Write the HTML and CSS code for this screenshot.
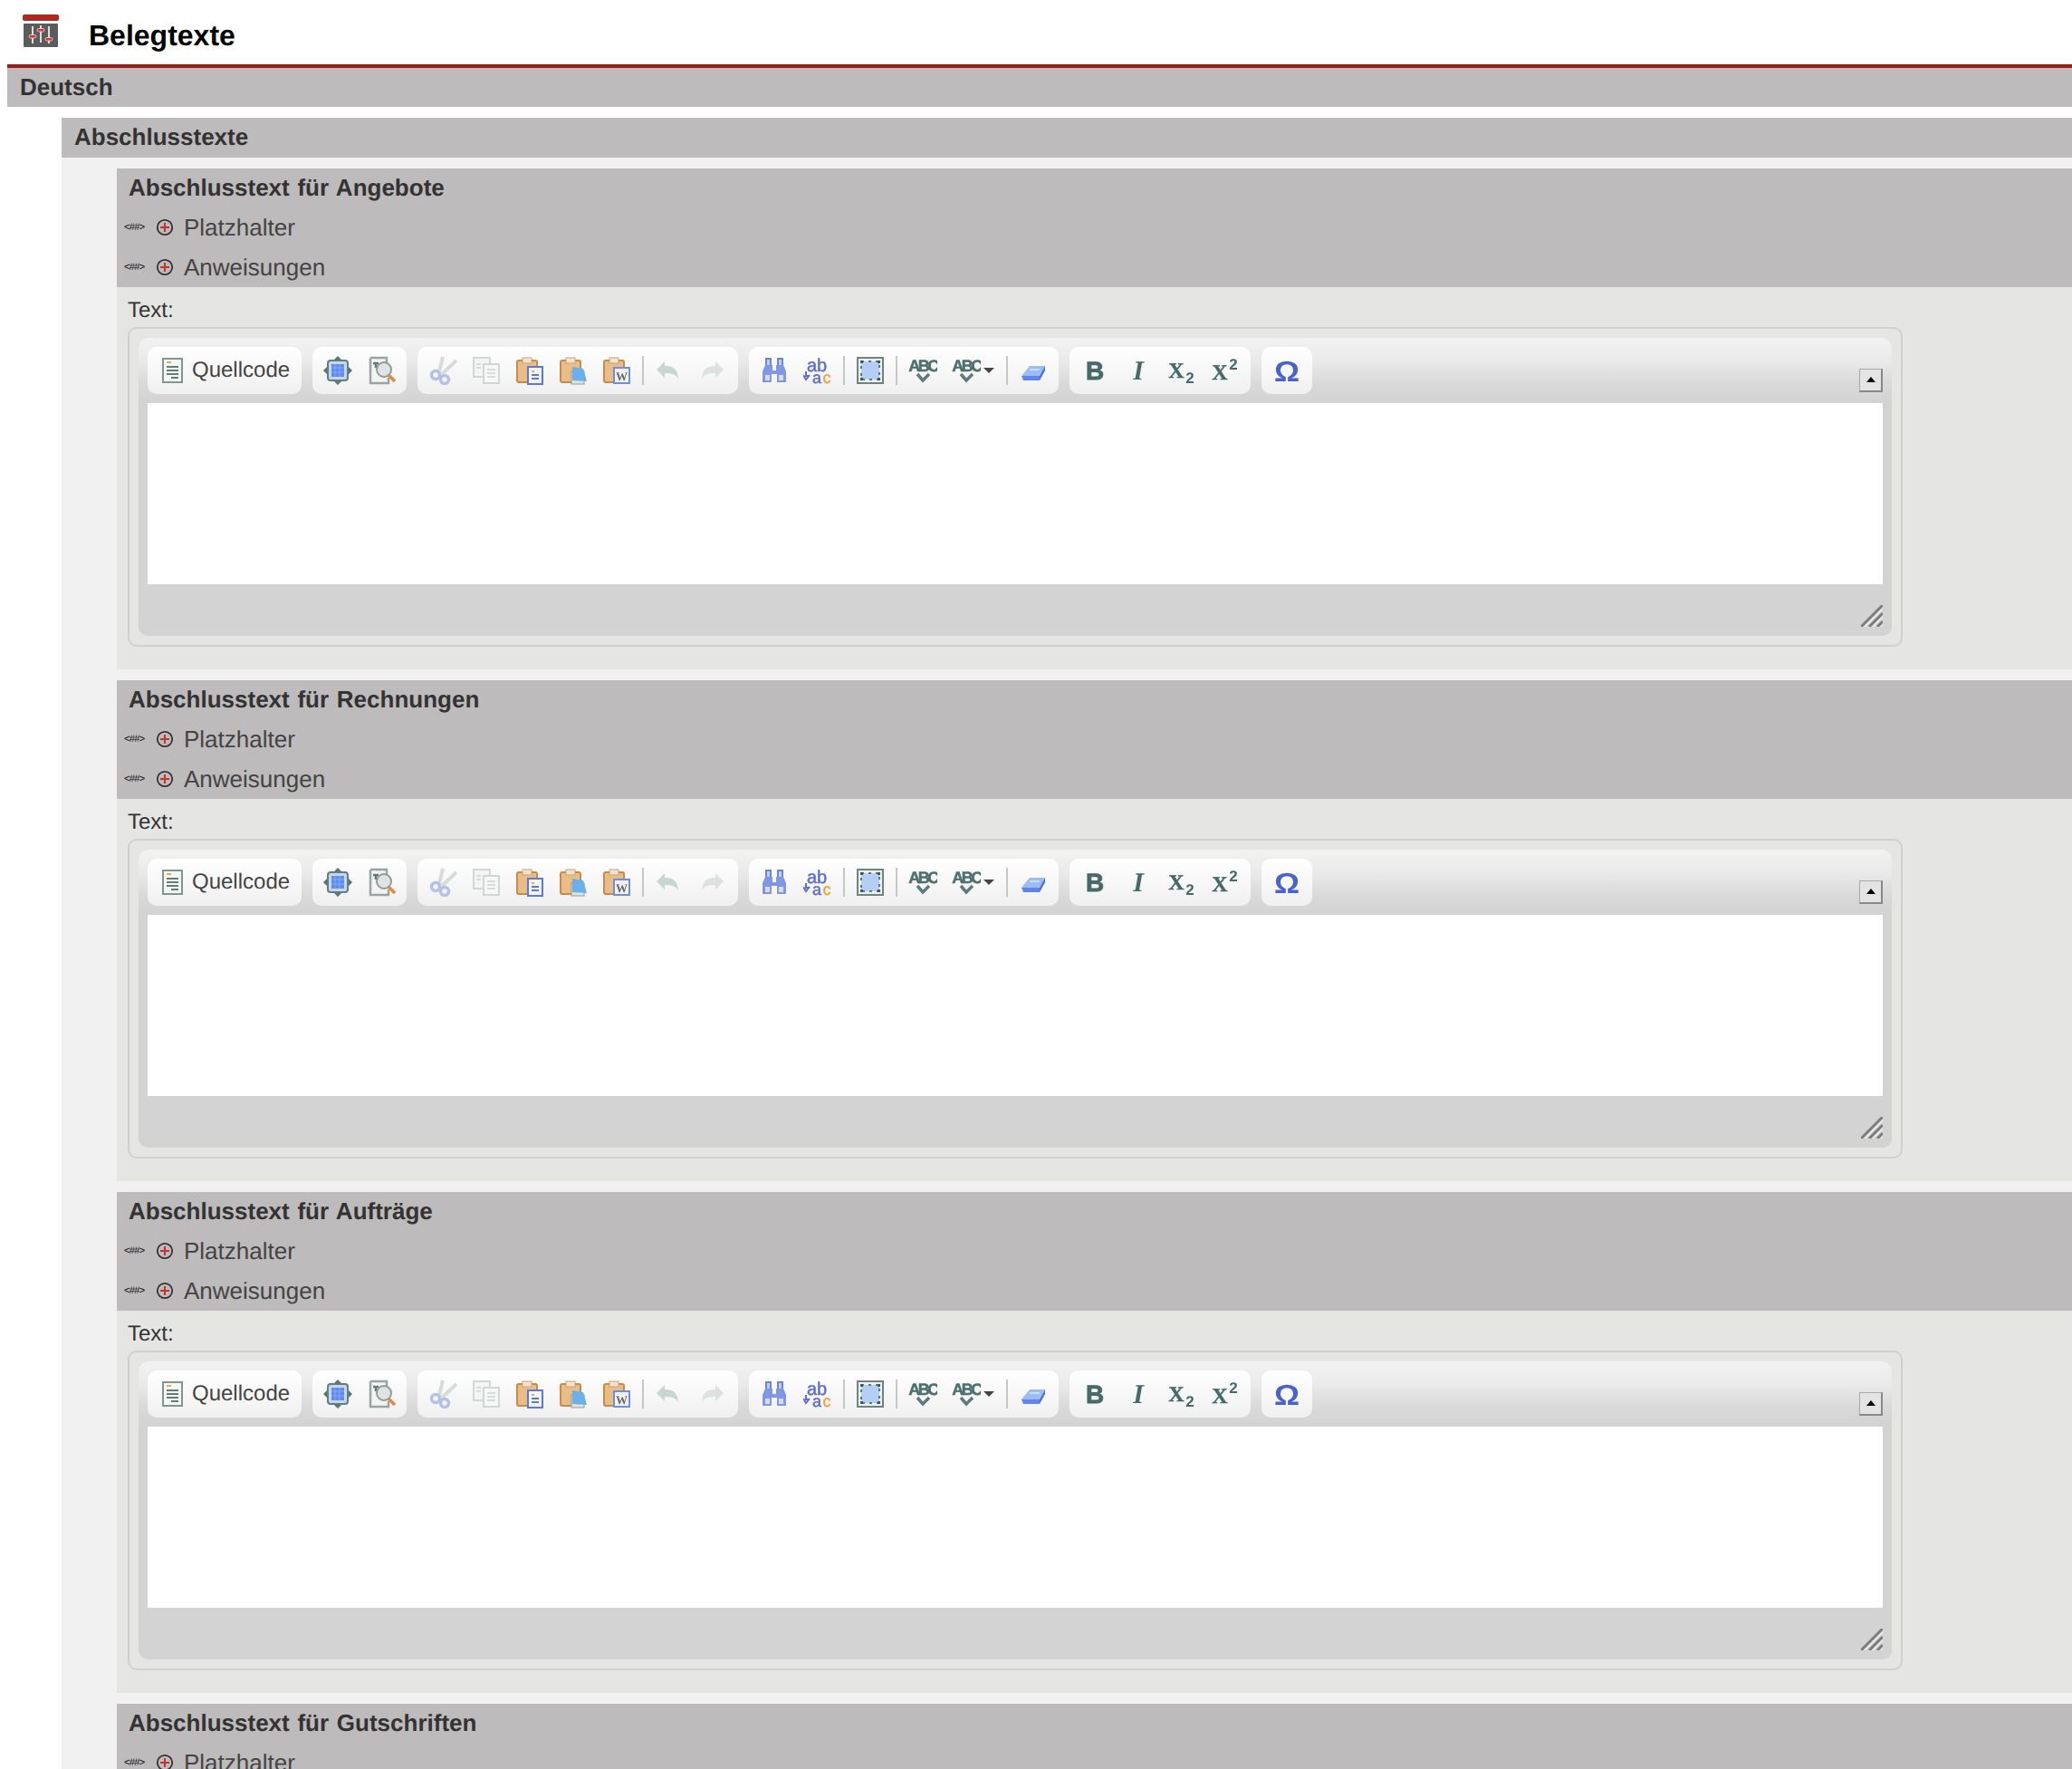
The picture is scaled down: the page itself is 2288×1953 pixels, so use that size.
FILE: index.html
```html
<!DOCTYPE html>
<html lang="de">
<head>
    <meta charset="UTF-8">
    <meta name="viewport" content="width=device-width, initial-scale=1.0">
    <title>Belegtexte</title>
    <link rel="stylesheet" href="styles.css">
</head>
<body>
    <!-- editor icons, reused by every toolbar -->
    <svg class="sprite" xmlns="http://www.w3.org/2000/svg">
        <symbol id="i-source" viewBox="0 0 32 32">
            <rect x="5" y="3" width="21" height="26" fill="#f5f7f3" stroke="#7f9692" stroke-width="2"/>
            <path d="M9 7h5" stroke="#eda94f" stroke-width="2"/>
            <path d="M9 12h13M9 16h13M9 20h13M14 24h8" stroke="#5f7d79" stroke-width="2"/>
        </symbol>
        <symbol id="i-maximize" viewBox="0 0 32 32">
            <path d="M16 0l5 5H11zM16 32l-5-5h10zM0 16l5-5v10zM32 16l-5 5V11z" fill="#55757a"/>
            <rect x="5" y="5" width="22" height="22" rx="3" fill="#c9d6e6" stroke="#5f7f80" stroke-width="2"/>
            <rect x="9" y="9" width="14" height="14" fill="#5f8cf0"/>
            <path d="M13 9v14M18 9v14M9 13h14M9 18h14" stroke="#84a8f6"/>
        </symbol>
        <symbol id="i-preview" viewBox="0 0 32 32">
            <path d="M4 2h18v8M4 2v28h20v-6" fill="#f3f3f1" stroke="#98a5a2" stroke-width="2.5"/>
            <path d="M7 8h6M10 8v5" stroke="#60787a" stroke-width="2.5"/>
            <circle cx="19" cy="15" r="8" fill="#dfe3e3" stroke="#8f9b99" stroke-width="2"/>
            <path d="M24 21l7 7" stroke="#e8893a" stroke-width="3.5"/>
        </symbol>
        <symbol id="i-cut" viewBox="0 0 32 32">
            <path d="M16 1l-4 16M31 5L15 20" stroke="#d6dbdb" stroke-width="4" fill="none"/>
            <circle cx="8" cy="21" r="4.5" fill="none" stroke="#b3c2e6" stroke-width="3.5"/>
            <circle cx="18" cy="26" r="4.5" fill="none" stroke="#b3c2e6" stroke-width="3.5"/>
        </symbol>
        <symbol id="i-copy" viewBox="0 0 32 32">
            <rect x="2" y="2" width="18" height="21" fill="#f4f5f3" stroke="#ced8d6" stroke-width="2"/>
            <rect x="13" y="9" width="17" height="21" fill="#f7f8f6" stroke="#ced8d6" stroke-width="2"/>
            <path d="M17 15h9M17 19h9M17 23h9M5 9h5M5 13h5" stroke="#d6dddc" stroke-width="2"/>
        </symbol>
        <symbol id="i-paste" viewBox="0 0 32 32">
            <rect x="2" y="5" width="22" height="24" rx="2" fill="#e9bd87" stroke="#c98a4a" stroke-width="2"/>
            <rect x="8" y="2" width="10" height="6" fill="#f4e3cb" stroke="#c9a27a"/>
            <rect x="14" y="12" width="16" height="19" fill="#f1f4fc" stroke="#5d78d8" stroke-width="2"/>
            <path d="M18 17h3" stroke="#eda94f" stroke-width="2"/>
            <path d="M18 21h8M18 25h8" stroke="#5d78d8" stroke-width="2"/>
        </symbol>
        <symbol id="i-paste-text" viewBox="0 0 32 32">
            <rect x="2" y="5" width="22" height="24" rx="2" fill="#e9bd87" stroke="#c98a4a" stroke-width="2"/>
            <rect x="8" y="2" width="10" height="6" fill="#f4e3cb" stroke="#c9a27a"/>
            <rect x="14" y="17" width="14" height="14" fill="#dfe3e3" stroke="#8f9c99"/>
            <path d="M15 12l12 2 4 14-16-1z" fill="#6cb0ea"/>
        </symbol>
        <symbol id="i-paste-word" viewBox="0 0 32 32">
            <rect x="2" y="5" width="22" height="24" rx="2" fill="#e9bd87" stroke="#c98a4a" stroke-width="2"/>
            <rect x="8" y="2" width="10" height="6" fill="#f4e3cb" stroke="#c9a27a"/>
            <rect x="13" y="13" width="17" height="17" fill="#f1f1ef" stroke="#6f8fe6" stroke-width="2"/>
            <text x="21.5" y="27" class="ico-text word">W</text>
        </symbol>
        <symbol id="i-undo" viewBox="0 0 32 32">
            <path d="M11 6v5c10 0 14 4 15 14-3-5-7-6-15-6v5l-9-9z" fill="#c9d5d3"/>
        </symbol>
        <symbol id="i-redo" viewBox="0 0 32 32">
            <path d="M19 6v5C9 11 5 15 4 25c3-5 7-6 15-6v5l9-9z" fill="#dbe2e1"/>
        </symbol>
        <symbol id="i-find" viewBox="0 0 32 32">
            <path d="M7 3h5v8H7zM20 3h5v8h-5z" fill="#bcd0f2" stroke="#6b86dc" stroke-width="2"/>
            <path d="M3 17l3-7h8v6h4v-6h8l3 7v12H19v-9h-6v9H3z" fill="#7f97e4"/>
            <path d="M6 21h5v6H6zM21 21h5v6h-5z" fill="#d9dbdd"/>
        </symbol>
        <symbol id="i-replace" viewBox="0 0 32 32">
            <text x="15" y="17" class="ico-text ab">ab</text>
            <text x="15" y="30" class="ico-text ab lower">a</text>
            <text x="26" y="30" class="ico-text ab lower c">c</text>
            <path d="M3 17v5h4M0 21l3 5 4-5" fill="none" stroke="#5f6fd0" stroke-width="2"/>
        </symbol>
        <symbol id="i-select" viewBox="0 0 32 32">
            <rect x="2" y="2" width="28" height="28" fill="#eef0ee" stroke="#6c8583" stroke-width="2"/>
            <rect x="6" y="6" width="20" height="20" fill="#b3cff5"/>
            <path d="M6 6h20v20H6z" fill="none" stroke="#5d7b7b" stroke-width="2" stroke-dasharray="3 5"/>
            <path d="M5 5h3v3H5zM24 5h3v3h-3zM5 24h3v3H5zM24 24h3v3h-3z" fill="#3e5c5c"/>
        </symbol>
        <symbol id="i-spell" viewBox="0 0 32 32">
            <text x="16" y="17" class="ico-text abc">ABC</text>
            <path d="M10 20l6 7 7-7" fill="none" stroke="#5d7b7b" stroke-width="3.5"/>
        </symbol>
        <symbol id="i-eraser" viewBox="0 0 32 32">
            <path d="M3 22l9-11h17l-6 11z" fill="#9cbcf6"/>
            <path d="M3 22h20v5H5z" fill="#5f86ec"/>
            <path d="M23 22l6-11v5l-6 11z" fill="#4e70d0"/>
            <path d="M12 15h11" stroke="#c9dbfa" stroke-width="2"/>
        </symbol>
        <symbol id="i-bold" viewBox="0 0 32 32">
            <text x="16" y="26" class="ico-text bold">B</text>
        </symbol>
        <symbol id="i-italic" viewBox="0 0 32 32">
            <text x="16" y="26" class="ico-text italic">I</text>
        </symbol>
        <symbol id="i-sub" viewBox="0 0 32 32">
            <text x="10" y="24" class="ico-text script">X</text>
            <text x="25" y="30" class="ico-text small">2</text>
        </symbol>
        <symbol id="i-sup" viewBox="0 0 32 32">
            <text x="10" y="26" class="ico-text script">X</text>
            <text x="25" y="15" class="ico-text small">2</text>
        </symbol>
        <symbol id="i-omega" viewBox="0 0 32 32">
            <text x="16" y="28" class="ico-text omega" textLength="28" lengthAdjust="spacingAndGlyphs">Ω</text>
        </symbol>
        <symbol id="i-placeholder-plus" viewBox="0 0 20 20">
            <circle cx="10" cy="10" r="8.2" fill="none" stroke="#333" stroke-width="1.8"/>
            <path d="M10 5v10M5 10h10" stroke="#c8322d" stroke-width="2"/>
        </symbol>
        <symbol id="i-grip" viewBox="0 0 24 24">
            <path d="M0 24L24 0M9 24L24 9M18 24l6-6" stroke="#7d7d7d" stroke-width="3"/>
            <path d="M4 24L24 4M13 24L24 13M22 24l2-2" stroke="#eee" stroke-width="1.5"/>
        </symbol>
    </svg>

    <div class="page">
        <header class="page-head">
            <svg class="page-icon" viewBox="0 0 40 36" xmlns="http://www.w3.org/2000/svg">
                <rect x="0" y="0" width="40" height="7" rx="2" fill="#ad2a20"/>
                <rect x="1" y="10" width="38" height="26" rx="1" fill="#5c5c5c"/>
                <path d="M11 13v19M20 12v19M29 13v19" stroke="#dedede" stroke-width="2"/>
                <rect x="7" y="22.5" width="8" height="3.5" rx="1.7" fill="#d8392e" stroke="#eee" stroke-width="0.7"/>
                <rect x="16" y="15.5" width="8" height="3.5" rx="1.7" fill="#d8392e" stroke="#eee" stroke-width="0.7"/>
                <rect x="25" y="25.5" width="8" height="3.5" rx="1.7" fill="#d8392e" stroke="#eee" stroke-width="0.7"/>
            </svg>
            <h1>Belegtexte</h1>
        </header>

        <h2 class="bar bar-lang">Deutsch</h2>

        <div class="group-level">
            <h3 class="bar">Abschlusstexte</h3>
            <div class="text-list">

                <section class="text-block">
                    <div class="block-head">
                        <h4>Abschlusstext für Angebote</h4>
                        <div class="fold-row"><span class="tag">&lt;##&gt;</span><svg class="plus"><use href="#i-placeholder-plus"/></svg>Platzhalter</div>
                        <div class="fold-row"><span class="tag">&lt;##&gt;</span><svg class="plus"><use href="#i-placeholder-plus"/></svg>Anweisungen</div>
                    </div>
                    <div class="block-body">
                        <label class="field-label">Text:</label>
                        <div class="editor">
                            <div class="editor-inner">
                                <div class="toolbar">
                                    <div class="tool-group">
                                        <span class="tool source"><svg class="ico"><use href="#i-source"/></svg></span><span class="tool-label">Quellcode</span>
                                    </div>
                                    <div class="tool-group">
                                        <span class="tool"><svg class="ico"><use href="#i-maximize"/></svg></span>
                                        <span class="tool"><svg class="ico"><use href="#i-preview"/></svg></span>
                                    </div>
                                    <div class="tool-group">
                                        <span class="tool"><svg class="ico"><use href="#i-cut"/></svg></span>
                                        <span class="tool"><svg class="ico"><use href="#i-copy"/></svg></span>
                                        <span class="tool"><svg class="ico"><use href="#i-paste"/></svg></span>
                                        <span class="tool"><svg class="ico"><use href="#i-paste-text"/></svg></span>
                                        <span class="tool"><svg class="ico"><use href="#i-paste-word"/></svg></span>
                                        <span class="sep"></span>
                                        <span class="tool"><svg class="ico"><use href="#i-undo"/></svg></span>
                                        <span class="tool"><svg class="ico"><use href="#i-redo"/></svg></span>
                                    </div>
                                    <div class="tool-group">
                                        <span class="tool"><svg class="ico"><use href="#i-find"/></svg></span>
                                        <span class="tool"><svg class="ico"><use href="#i-replace"/></svg></span>
                                        <span class="sep"></span>
                                        <span class="tool"><svg class="ico"><use href="#i-select"/></svg></span>
                                        <span class="sep"></span>
                                        <span class="tool"><svg class="ico"><use href="#i-spell"/></svg></span>
                                        <span class="tool tool-drop"><svg class="ico"><use href="#i-spell"/></svg><span class="drop-arrow"></span></span>
                                        <span class="sep"></span>
                                        <span class="tool"><svg class="ico"><use href="#i-eraser"/></svg></span>
                                    </div>
                                    <div class="tool-group">
                                        <span class="tool"><svg class="ico"><use href="#i-bold"/></svg></span>
                                        <span class="tool"><svg class="ico"><use href="#i-italic"/></svg></span>
                                        <span class="tool"><svg class="ico"><use href="#i-sub"/></svg></span>
                                        <span class="tool"><svg class="ico"><use href="#i-sup"/></svg></span>
                                    </div>
                                    <div class="tool-group">
                                        <span class="tool"><svg class="ico"><use href="#i-omega"/></svg></span>
                                    </div>
                                    <span class="collapse"></span>
                                </div>
                                <div class="editor-area"></div>
                                <div class="editor-foot"><svg class="grip"><use href="#i-grip"/></svg></div>
                            </div>
                        </div>
                    </div>
                </section>

                <section class="text-block">
                    <div class="block-head">
                        <h4>Abschlusstext für Rechnungen</h4>
                        <div class="fold-row"><span class="tag">&lt;##&gt;</span><svg class="plus"><use href="#i-placeholder-plus"/></svg>Platzhalter</div>
                        <div class="fold-row"><span class="tag">&lt;##&gt;</span><svg class="plus"><use href="#i-placeholder-plus"/></svg>Anweisungen</div>
                    </div>
                    <div class="block-body">
                        <label class="field-label">Text:</label>
                        <div class="editor">
                            <div class="editor-inner">
                                <div class="toolbar">
                                    <div class="tool-group">
                                        <span class="tool source"><svg class="ico"><use href="#i-source"/></svg></span><span class="tool-label">Quellcode</span>
                                    </div>
                                    <div class="tool-group">
                                        <span class="tool"><svg class="ico"><use href="#i-maximize"/></svg></span>
                                        <span class="tool"><svg class="ico"><use href="#i-preview"/></svg></span>
                                    </div>
                                    <div class="tool-group">
                                        <span class="tool"><svg class="ico"><use href="#i-cut"/></svg></span>
                                        <span class="tool"><svg class="ico"><use href="#i-copy"/></svg></span>
                                        <span class="tool"><svg class="ico"><use href="#i-paste"/></svg></span>
                                        <span class="tool"><svg class="ico"><use href="#i-paste-text"/></svg></span>
                                        <span class="tool"><svg class="ico"><use href="#i-paste-word"/></svg></span>
                                        <span class="sep"></span>
                                        <span class="tool"><svg class="ico"><use href="#i-undo"/></svg></span>
                                        <span class="tool"><svg class="ico"><use href="#i-redo"/></svg></span>
                                    </div>
                                    <div class="tool-group">
                                        <span class="tool"><svg class="ico"><use href="#i-find"/></svg></span>
                                        <span class="tool"><svg class="ico"><use href="#i-replace"/></svg></span>
                                        <span class="sep"></span>
                                        <span class="tool"><svg class="ico"><use href="#i-select"/></svg></span>
                                        <span class="sep"></span>
                                        <span class="tool"><svg class="ico"><use href="#i-spell"/></svg></span>
                                        <span class="tool tool-drop"><svg class="ico"><use href="#i-spell"/></svg><span class="drop-arrow"></span></span>
                                        <span class="sep"></span>
                                        <span class="tool"><svg class="ico"><use href="#i-eraser"/></svg></span>
                                    </div>
                                    <div class="tool-group">
                                        <span class="tool"><svg class="ico"><use href="#i-bold"/></svg></span>
                                        <span class="tool"><svg class="ico"><use href="#i-italic"/></svg></span>
                                        <span class="tool"><svg class="ico"><use href="#i-sub"/></svg></span>
                                        <span class="tool"><svg class="ico"><use href="#i-sup"/></svg></span>
                                    </div>
                                    <div class="tool-group">
                                        <span class="tool"><svg class="ico"><use href="#i-omega"/></svg></span>
                                    </div>
                                    <span class="collapse"></span>
                                </div>
                                <div class="editor-area"></div>
                                <div class="editor-foot"><svg class="grip"><use href="#i-grip"/></svg></div>
                            </div>
                        </div>
                    </div>
                </section>

                <section class="text-block">
                    <div class="block-head">
                        <h4>Abschlusstext für Aufträge</h4>
                        <div class="fold-row"><span class="tag">&lt;##&gt;</span><svg class="plus"><use href="#i-placeholder-plus"/></svg>Platzhalter</div>
                        <div class="fold-row"><span class="tag">&lt;##&gt;</span><svg class="plus"><use href="#i-placeholder-plus"/></svg>Anweisungen</div>
                    </div>
                    <div class="block-body">
                        <label class="field-label">Text:</label>
                        <div class="editor">
                            <div class="editor-inner">
                                <div class="toolbar">
                                    <div class="tool-group">
                                        <span class="tool source"><svg class="ico"><use href="#i-source"/></svg></span><span class="tool-label">Quellcode</span>
                                    </div>
                                    <div class="tool-group">
                                        <span class="tool"><svg class="ico"><use href="#i-maximize"/></svg></span>
                                        <span class="tool"><svg class="ico"><use href="#i-preview"/></svg></span>
                                    </div>
                                    <div class="tool-group">
                                        <span class="tool"><svg class="ico"><use href="#i-cut"/></svg></span>
                                        <span class="tool"><svg class="ico"><use href="#i-copy"/></svg></span>
                                        <span class="tool"><svg class="ico"><use href="#i-paste"/></svg></span>
                                        <span class="tool"><svg class="ico"><use href="#i-paste-text"/></svg></span>
                                        <span class="tool"><svg class="ico"><use href="#i-paste-word"/></svg></span>
                                        <span class="sep"></span>
                                        <span class="tool"><svg class="ico"><use href="#i-undo"/></svg></span>
                                        <span class="tool"><svg class="ico"><use href="#i-redo"/></svg></span>
                                    </div>
                                    <div class="tool-group">
                                        <span class="tool"><svg class="ico"><use href="#i-find"/></svg></span>
                                        <span class="tool"><svg class="ico"><use href="#i-replace"/></svg></span>
                                        <span class="sep"></span>
                                        <span class="tool"><svg class="ico"><use href="#i-select"/></svg></span>
                                        <span class="sep"></span>
                                        <span class="tool"><svg class="ico"><use href="#i-spell"/></svg></span>
                                        <span class="tool tool-drop"><svg class="ico"><use href="#i-spell"/></svg><span class="drop-arrow"></span></span>
                                        <span class="sep"></span>
                                        <span class="tool"><svg class="ico"><use href="#i-eraser"/></svg></span>
                                    </div>
                                    <div class="tool-group">
                                        <span class="tool"><svg class="ico"><use href="#i-bold"/></svg></span>
                                        <span class="tool"><svg class="ico"><use href="#i-italic"/></svg></span>
                                        <span class="tool"><svg class="ico"><use href="#i-sub"/></svg></span>
                                        <span class="tool"><svg class="ico"><use href="#i-sup"/></svg></span>
                                    </div>
                                    <div class="tool-group">
                                        <span class="tool"><svg class="ico"><use href="#i-omega"/></svg></span>
                                    </div>
                                    <span class="collapse"></span>
                                </div>
                                <div class="editor-area"></div>
                                <div class="editor-foot"><svg class="grip"><use href="#i-grip"/></svg></div>
                            </div>
                        </div>
                    </div>
                </section>

                <section class="text-block">
                    <div class="block-head">
                        <h4>Abschlusstext für Gutschriften</h4>
                        <div class="fold-row"><span class="tag">&lt;##&gt;</span><svg class="plus"><use href="#i-placeholder-plus"/></svg>Platzhalter</div>
                    </div>
                </section>

            </div>
        </div>
    </div>
</body>
</html>
```

FILE: styles.css
```css
html, body {
    margin: 0;
    height: 1953px;
    overflow: hidden;
}
body {
    font-family: "Liberation Sans", Arial, sans-serif;
    background-color: #fff;
    color: #333;
    text-rendering: geometricPrecision;
}
.sprite {
    display: none;
}
.page {
    padding-left: 8px;
}

/* page header */
.page-head {
    display: flex;
    align-items: flex-start;
    box-sizing: border-box;
    height: 75px;
    padding: 16px 0 0 17px;
    border-bottom: 4px solid #9b1b16;
}
.page-icon {
    width: 40px;
    height: 36px;
    filter: blur(0.5px);
}
.page-head h1 {
    margin: 3px 0 0 33px;
    font-size: 32px;
    line-height: 40px;
    font-weight: bold;
    color: #000;
}

/* grey title bars */
.bar {
    margin: 0;
    padding: 0 0 2px 14px;
    background-color: #bdbbbc;
    font-size: 26px;
    line-height: 42px;
    font-weight: bold;
    color: #333;
}
.bar-lang {
    padding-bottom: 0;
    line-height: 43px;
}
.group-level {
    margin: 12px 0 0 60px;
}
.text-list {
    display: flex;
    flex-direction: column;
    gap: 12px;
    padding: 12px 0 0 61px;
    background-color: #f1f1f1;
}

/* one text block */
.block-head {
    background-color: #bdbbbc;
}
.block-head h4 {
    margin: 0;
    padding: 0 0 1px 13px;
    font-size: 26px;
    line-height: 42px;
    font-weight: bold;
    word-spacing: 1.5px;
    color: #333;
}
.fold-row {
    display: flex;
    align-items: center;
    height: 44px;
    padding-left: 8px;
    font-size: 26px;
    color: #444;
}
.tag {
    width: 22px;
    font-size: 11px;
    letter-spacing: -0.6px;
    color: #111;
    white-space: nowrap;
}
.plus {
    width: 20px;
    height: 20px;
    margin: 0 11px 0 13px;
}
.block-body {
    padding: 7px 0 25px 12px;
    background-color: #e5e5e3;
}
.field-label {
    display: block;
    font-size: 24px;
    line-height: 37px;
    color: #333;
}

/* rich text editor */
.editor {
    box-sizing: border-box;
    width: 1960px;
    height: 353px;
    padding: 10px;
    border: 2px solid #d0d0ce;
    border-radius: 10px;
}
.editor-inner {
    display: flex;
    flex-direction: column;
    height: 100%;
    border-radius: 10px;
    background-color: #d3d3d3;
    overflow: hidden;
}
.toolbar {
    display: flex;
    gap: 12px;
    box-sizing: border-box;
    height: 72px;
    padding: 10px;
    background: linear-gradient(#f2f2f2 0%, #eaeaea 35%, #d9d9d9 70%, #d3d3d3 100%);
}
.tool-group {
    display: flex;
    align-items: center;
    height: 52px;
    padding: 0 4px;
    border-radius: 10px;
    background: linear-gradient(#fff, #f0f0f0);
}
.tool {
    display: flex;
    align-items: center;
    justify-content: center;
    width: 48px;
    height: 52px;
}
.ico {
    width: 32px;
    height: 32px;
    filter: blur(0.45px);
}
.ico-text {
    text-anchor: middle;
    font-family: "Liberation Sans", Arial, sans-serif;
    font-weight: bold;
    fill: #46696a;
}
.ico-text.bold { font-size: 28px; stroke: #46696a; stroke-width: 0.8px; }
.ico-text.italic { font-family: "Liberation Serif", serif; font-style: italic; font-size: 30px; }
.ico-text.script { font-family: "Liberation Serif", serif; font-size: 24px; stroke: #46696a; stroke-width: 0.4px; }
.ico-text.small { font-size: 17px; }
.ico-text.abc { font-size: 18px; letter-spacing: -2.5px; fill: #4f7070; stroke: #4f7070; stroke-width: 0.5px; }
.ico-text.ab { font-size: 20px; font-weight: normal; stroke: #5f6fd0; stroke-width: 0.5px; fill: #5f6fd0; }
.ico-text.lower { font-size: 18px; }
.ico-text.c { fill: #f2a33c; stroke: #f2a33c; }
.ico-text.word { font-size: 13px; fill: #666; font-family: "Liberation Serif", serif; }
.ico-text.omega { font-size: 32px; fill: #4a62cc; }
.source {
    margin-right: -3px;
}
.tool-label {
    padding-right: 9px;
    font-size: 24px;
    color: #444;
}
.sep {
    width: 2px;
    height: 32px;
    margin: 0 4px;
    background-color: #c6c8c8;
}
.tool-drop {
    justify-content: flex-start;
    width: 64px;
}
.tool-drop .ico {
    margin-left: 8px;
}
.drop-arrow {
    width: 0;
    height: 0;
    margin-left: 3px;
    border-left: 6px solid transparent;
    border-right: 6px solid transparent;
    border-top: 6px solid #444;
}
.collapse {
    position: relative;
    box-sizing: border-box;
    align-self: flex-end;
    width: 26px;
    height: 26px;
    margin: 0 0 2px auto;
    border: 1px solid #aaa;
    border-right: 2px solid #888;
    border-bottom: 2px solid #888;
    background-color: #e4e4e4;
}
/* the little triangle inside the collapse button */
.collapse::after {
    content: "";
    position: absolute;
    left: 7px;
    top: 8px;
    border-left: 5px solid transparent;
    border-right: 5px solid transparent;
    border-bottom: 6px solid #000;
}
.editor-area {
    height: 200px;
    margin: 0 10px;
    background-color: #fff;
}
.editor-foot {
    display: flex;
    justify-content: flex-end;
    align-items: flex-end;
    flex: 1;
    padding: 0 10px 10px 0;
}
.grip {
    width: 24px;
    height: 24px;
}
```
